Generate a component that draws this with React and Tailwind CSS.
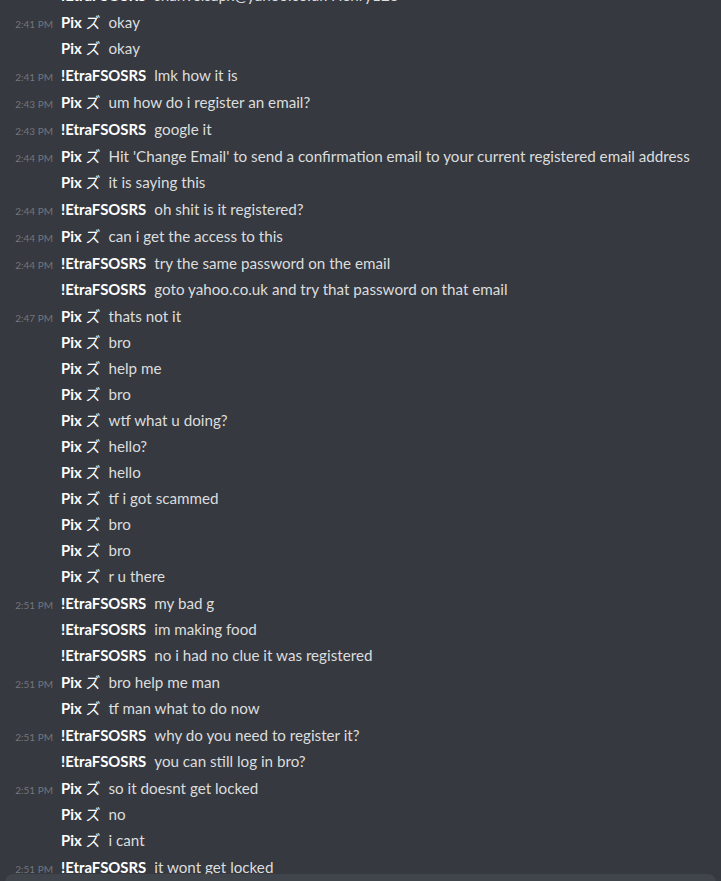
const PIX = "Pix";
const ETRA = "!EtraFSOSRS";

const messages = [
  { name: ETRA, text: "shanvelsapx@yahoo.co.uk Henry123" },
  { time: "2:41 PM", name: PIX, text: "okay" },
  { name: PIX, text: "okay" },
  { time: "2:41 PM", name: ETRA, text: "lmk how it is" },
  { time: "2:43 PM", name: PIX, text: "um how do i register an email?" },
  { time: "2:43 PM", name: ETRA, text: "google it" },
  {
    time: "2:44 PM",
    name: PIX,
    text: "Hit 'Change Email' to send a confirmation email to your current registered email address",
  },
  { name: PIX, text: "it is saying this" },
  { time: "2:44 PM", name: ETRA, text: "oh shit is it registered?" },
  { time: "2:44 PM", name: PIX, text: "can i get the access to this" },
  { time: "2:44 PM", name: ETRA, text: "try the same password on the email" },
  { name: ETRA, text: "goto yahoo.co.uk and try that password on that email" },
  { time: "2:47 PM", name: PIX, text: "thats not it" },
  { name: PIX, text: "bro" },
  { name: PIX, text: "help me" },
  { name: PIX, text: "bro" },
  { name: PIX, text: "wtf what u doing?" },
  { name: PIX, text: "hello?" },
  { name: PIX, text: "hello" },
  { name: PIX, text: "tf i got scammed" },
  { name: PIX, text: "bro" },
  { name: PIX, text: "bro" },
  { name: PIX, text: "r u there" },
  { time: "2:51 PM", name: ETRA, text: "my bad g" },
  { name: ETRA, text: "im making food" },
  { name: ETRA, text: "no i had no clue it was registered" },
  { time: "2:51 PM", name: PIX, text: "bro help me man" },
  { name: PIX, text: "tf man what to do now" },
  { time: "2:51 PM", name: ETRA, text: "why do you need to register it?" },
  { name: ETRA, text: "you can still log in bro?" },
  { time: "2:51 PM", name: PIX, text: "so it doesnt get locked" },
  { name: PIX, text: "no" },
  { name: PIX, text: "i cant" },
  { time: "2:51 PM", name: ETRA, text: "it wont get locked" },
];

const Row = ({ msg }) => (
  <div
    className={`flex items-baseline h-[26px] leading-[26px] ${
      msg.time ? "mt-px" : ""
    }`}
  >
    <span className="w-[53px] shrink-0 text-right text-[10px] text-[#72767d]">
      {msg.time || ""}
    </span>
    <span className="ml-2 mr-2 text-[14.9px] font-bold text-white whitespace-nowrap">
      {msg.name}
      {msg.name === PIX && <span className="font-normal"> ズ</span>}
    </span>
    <span className="text-[#dcddde] whitespace-nowrap">{msg.text}</span>
  </div>
);

export default function App() {
  return (
    <div
      className="h-[881px] w-full overflow-hidden bg-[#36393f] text-[15.2px]"
      style={{ fontFamily: "Lato, 'Noto Sans CJK JP', sans-serif" }}
    >
      <div className="-mt-[18px] flex flex-col">
        {messages.map((m, i) => (
          <Row key={i} msg={m} />
        ))}
      </div>
      {/* chat input, only its top edge shows */}
      <div className="relative mx-[5px] -mt-[6px] h-[44px] rounded-lg bg-[#40444b]" />
    </div>
  );
}
